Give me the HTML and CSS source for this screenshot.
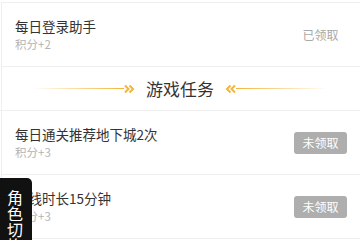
FILE: index.html
```
<!DOCTYPE html>
<html>
<head>
<meta charset="utf-8">
<link rel="stylesheet" href="styles.css">
</head>
<body>
<div class="page">
  <div class="list">
    <div class="row">
      <div class="info">
        <div class="title">每日登录助手</div>
        <div class="sub">积分+2</div>
      </div>
      <div class="btn done">已领取</div>
    </div>
    <div class="section">
      <span class="line line-l"></span>
      <svg class="chev" width="11" height="10" viewBox="0 0 11 10"><polyline points="1,1.5 4.5,5 1,8.5" fill="none" stroke="#f5b43a" stroke-width="2"/><polyline points="5.5,1.5 9,5 5.5,8.5" fill="none" stroke="#f5b43a" stroke-width="2"/></svg>
      <span class="section-title">游戏任务</span>
      <svg class="chev" width="11" height="10" viewBox="0 0 11 10"><polyline points="10,1.5 6.5,5 10,8.5" fill="none" stroke="#f5b43a" stroke-width="2"/><polyline points="5.5,1.5 2,5 5.5,8.5" fill="none" stroke="#f5b43a" stroke-width="2"/></svg>
      <span class="line line-r"></span>
    </div>
    <div class="row">
      <div class="info">
        <div class="title">每日通关推荐地下城2次</div>
        <div class="sub">积分+3</div>
      </div>
      <div class="btn">未领取</div>
    </div>
    <div class="row">
      <div class="info">
        <div class="title">在线时长15分钟</div>
        <div class="sub">积分+3</div>
      </div>
      <div class="btn">未领取</div>
    </div>
  </div>
  <div class="tab">角<br>色<br>切<br>换</div>
</div>
</body>
</html>
```
FILE: styles.css
```
html, body {
  margin: 0;
  padding: 0;
  background: #ffffff;
  overflow: hidden;
}
body {
  width: 360px;
  height: 240px;
  font-family: "Noto Sans CJK SC", "Noto Sans", sans-serif;
}
.page {
  position: relative;
  width: 360px;
  height: 240px;
  overflow: hidden;
  padding-top: 2px;
  box-sizing: border-box;
}
.list {
  margin-left: 1px;
  border-left: 1px solid #efefef;
  border-top: 1px solid #efefef;
}
.row {
  height: 63px;
  border-bottom: 1px solid #efefef;
  display: flex;
  align-items: center;
  justify-content: space-between;
  padding: 0 13px 0 13px;
}
.info {
  display: flex;
  flex-direction: column;
}
.title {
  font-size: 13.5px;
  line-height: 18px;
  color: #333333;
}
.sub {
  margin-top: 1px;
  font-size: 11.5px;
  line-height: 16px;
  color: #b3b3b3;
}
.btn {
  width: 53px;
  height: 22px;
  border-radius: 3px;
  background: #aeaeae;
  color: #ffffff;
  font-size: 12px;
  line-height: 22px;
  text-align: center;
}
.btn.done {
  background: transparent;
  color: #a8a8a8;
}
.section {
  height: 43px;
  border-bottom: 1px solid #efefef;
  display: flex;
  align-items: center;
  justify-content: center;
  margin-left: -2px;
}
.line {
  width: 92px;
  height: 1px;
}
.line-l {
  background: linear-gradient(to right, rgba(245, 180, 58, 0), #f5b43a);
}
.line-r {
  background: linear-gradient(to left, rgba(245, 180, 58, 0), #f5b43a);
}
.chev {
  display: block;
}
.section-title {
  font-size: 17px;
  line-height: 24px;
  color: #333333;
  margin: 0 11px;
}
.tab {
  position: absolute;
  left: 0;
  top: 178px;
  width: 32px;
  height: 80px;
  background: #111111;
  border-top-right-radius: 5px;
  color: #ffffff;
  font-size: 16px;
  line-height: 16px;
  text-align: center;
  padding-top: 11px;
  box-sizing: border-box;
  padding-right: 2px;
}
```
